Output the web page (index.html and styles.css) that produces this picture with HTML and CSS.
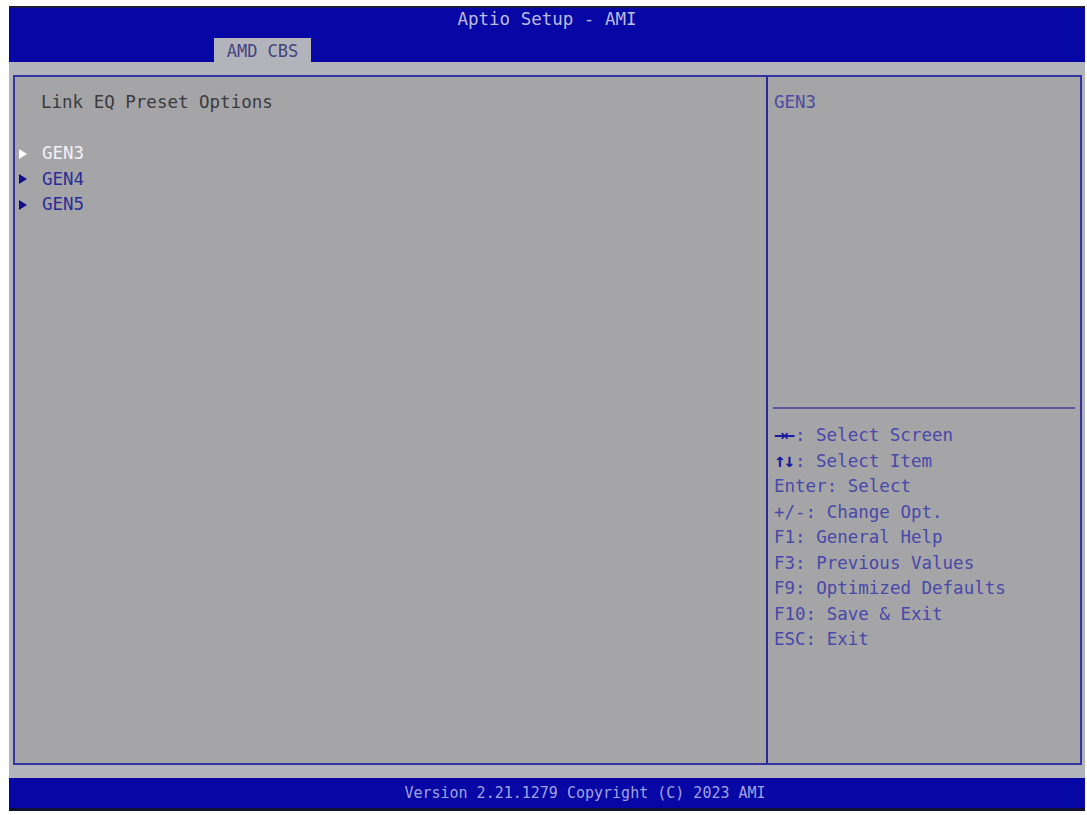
FILE: index.html
```html
<!DOCTYPE html>
<html lang="en">
<head>
    <meta charset="UTF-8">
    <title>Aptio Setup - AMI</title>
    <link rel="stylesheet" href="styles.css">
</head>
<body>
    <div class="screen">
        <!-- Title bar with tab -->
        <div class="header">
            <div class="title">Aptio Setup - AMI</div>
            <div class="tabs">
                <div class="tab">AMD CBS</div>
            </div>
        </div>

        <div class="body">
            <div class="panel">
                <!-- Left: menu -->
                <div class="menu">
                    <div class="heading">Link EQ Preset Options</div>
                    <div class="blank"></div>
                    <div class="item selected"><span class="arrow"></span>GEN3</div>
                    <div class="item"><span class="arrow"></span>GEN4</div>
                    <div class="item"><span class="arrow"></span>GEN5</div>
                </div>

                <!-- Right: help -->
                <div class="side">
                    <div class="desc">GEN3</div>
                    <div class="rule"></div>
                    <div class="keys">
                        <div><b>&rarr;&larr;</b>: Select Screen</div>
                        <div><b>&uarr;&darr;</b>: Select Item</div>
                        <div>Enter: Select</div>
                        <div>+/-: Change Opt.</div>
                        <div>F1: General Help</div>
                        <div>F3: Previous Values</div>
                        <div>F9: Optimized Defaults</div>
                        <div>F10: Save &amp; Exit</div>
                        <div>ESC: Exit</div>
                    </div>
                </div>
            </div>
        </div>

        <div class="footer">Version 2.21.1279 Copyright (C) 2023 AMI</div>
    </div>
</body>
</html>
```

FILE: styles.css
```css
/* Aptio setup screen */
body {
    margin: 0;
    background-color: #fff;
    font-family: "DejaVu Sans Mono", "Liberation Mono", monospace;
    font-size: 17.5px;
}

.screen {
    margin: 6px 2px 0 9px;
    width: 1076px;
    background-color: #b3b3bb;
}

.header {
    height: 56px;
    box-sizing: border-box;
    background-color: #0707a6;
    border-top: 2px solid #1a1a40;
    display: flex;
    flex-direction: column;
}

.title {
    text-align: center;
    color: #bcbcdc;
    line-height: 20px;
    padding-top: 1px;
}

.tabs {
    margin-top: auto;
    padding-left: 205px;
    display: flex;
}

.tab {
    width: 97px;
    height: 24px;
    line-height: 26px;
    text-align: center;
    background-color: #b3b3bb;
    color: #44447e;
    font-size: 17px;
}

.body {
    padding: 13px 3px 0 4px;
}

.panel {
    height: 690px;
    box-sizing: border-box;
    border: 2px solid #3434a0;
    background-color: #a5a5a7;
    display: flex;
}

.menu {
    flex: 0 0 753px;
    border-right: 2px solid #2a2aa0;
    padding: 13px 0 0 4px;
    box-sizing: border-box;
    line-height: 25.5px;
}

.heading {
    padding-left: 22px;
    color: #3a3a3e;
}

.blank {
    height: 25.5px;
}

.item {
    display: flex;
    align-items: center;
    color: #2c2c98;
}

.item.selected {
    color: #f2f2f6;
}

.arrow {
    width: 0;
    height: 0;
    border-top: 5px solid transparent;
    border-bottom: 5px solid transparent;
    border-left: 8px solid #10108a;
    margin-right: 15px;
}

.item.selected .arrow {
    border-left-color: #fff;
}

.side {
    flex: 1;
    display: flex;
    flex-direction: column;
}

.desc {
    height: 330px;
    box-sizing: border-box;
    padding: 13px 0 0 6px;
    line-height: 25.5px;
    color: #4a4aa2;
}

.rule {
    height: 2px;
    margin: 0 5px;
    background-color: #5a5aa4;
}

.keys {
    padding: 14px 0 0 6px;
    line-height: 25.5px;
    color: #4848aa;
}

.keys div {
    height: 25.5px;
}

.keys b {
    display: inline-block;
    width: 21px;
    line-height: 1;
    font-size: 19px;
    color: #1a1aa0;
    letter-spacing: -2px;
    white-space: nowrap;
}

.footer {
    margin-top: 13px;
    height: 33px;
    box-sizing: border-box;
    background-color: #0707a6;
    border-bottom: 3px solid #101030;
    color: #a2a2e0;
    text-align: center;
    font-size: 15px;
    line-height: 30px;
    padding-left: 76px;
}
```
